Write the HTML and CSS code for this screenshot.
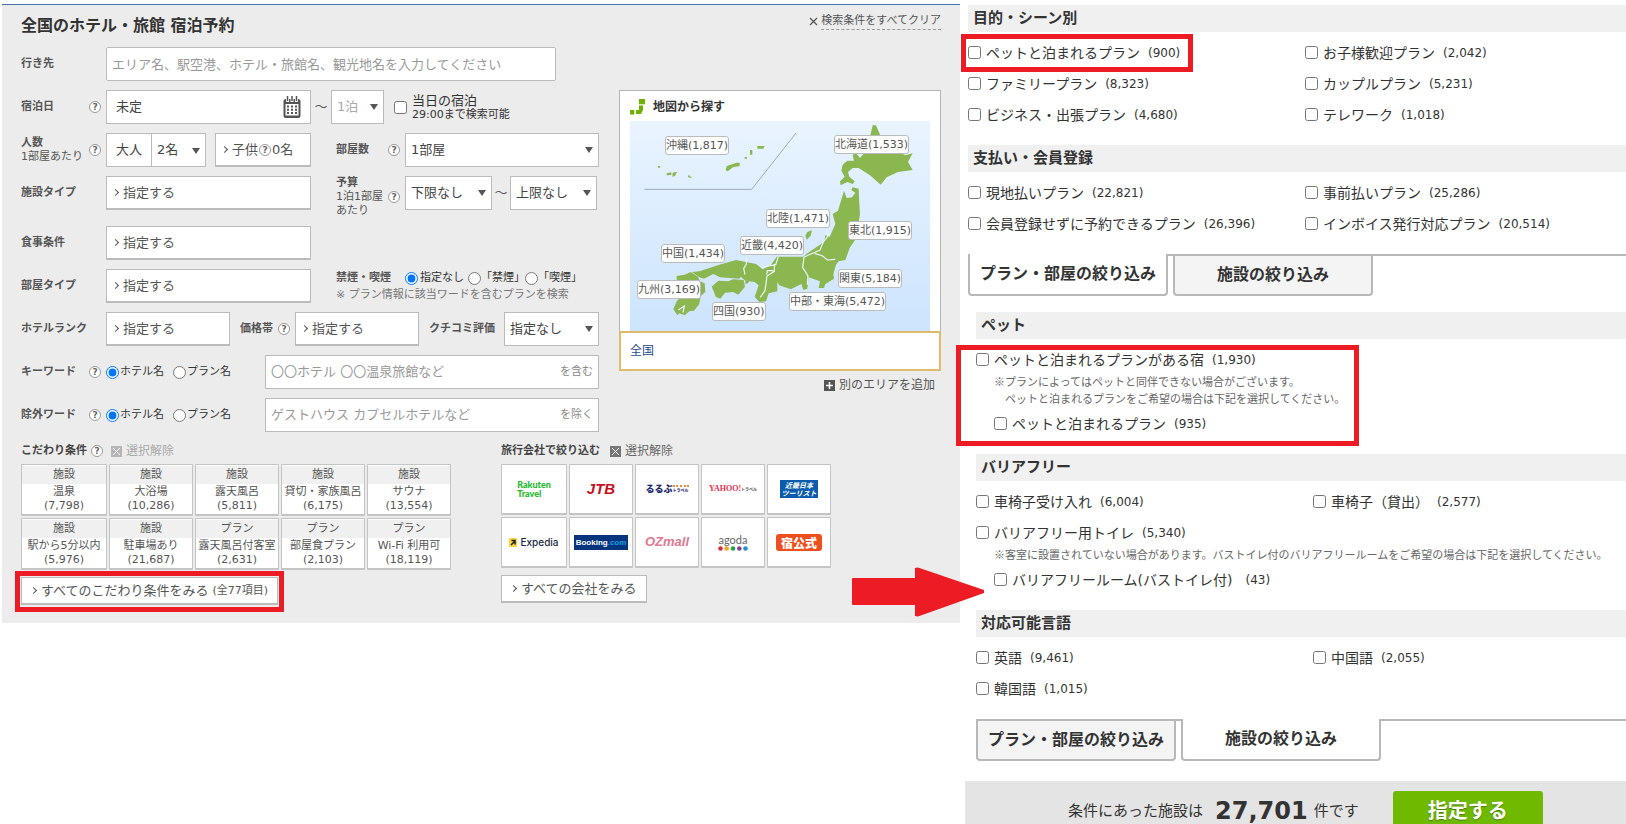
FILE: index.html
```html
<!DOCTYPE html>
<html lang="ja">
<head>
<meta charset="utf-8">
<title>全国のホテル・旅館 宿泊予約</title>
<link rel="stylesheet" href="styles.css">
</head>
<body>
<div class="page">
<main class="search">
  <header class="search-head">
    <h1>全国のホテル・旅館 宿泊予約</h1>
    <a href="#" class="clear"><svg width="9" height="9" viewBox="0 0 9 9"><path d="M1 1l7 7M8 1l-7 7" stroke="#555" stroke-width="1.3"/></svg><span>検索条件をすべてクリア</span></a>
  </header>

  <div class="row">
    <label class="lab" for="dest">行き先</label>
    <input id="dest" class="field dest" type="text" placeholder="エリア名、駅空港、ホテル・旅館名、観光地名を入力してください">
  </div>

  <div class="columns">
    <div class="fields">
      <div class="row">
        <div class="lab"><label for="date">宿泊日</label><button class="help">?</button></div>
        <div class="field date half"><input id="date" type="text" value="未定"><button class="cal" aria-label="カレンダー"><svg width="18" height="23" viewBox="0 0 18 23"><path d="M3 3h12a2.500 2.500 0 0 1 2.500 2.500v14a2.500 2.500 0 0 1-2.500 2.500H3a2.500 2.500 0 0 1-2.500-2.500v-14A2.500 2.500 0 0 1 3 3z" fill="#555"/><path d="M2.500 8h13v11.500h-13z" fill="#fff"/><path d="M4.500 0v6M9 0v6M13.500 0v6" stroke="#fff" stroke-width="3"/><path d="M4.500 0v5M9 0v5M13.500 0v5" stroke="#555" stroke-width="1.500"/><path d="M4 10.500h10M4 13.700h10M4 17h10" stroke="#555" stroke-width="2" stroke-dasharray="2 2"/></svg></button></div>
        <span class="tilde">～</span>
        <span class="select nights"><select aria-label="泊数" class="muted"><option>1泊</option></select></span>
        <label class="today"><input type="checkbox"><span>当日の宿泊<small>29:00まで検索可能</small></span></label>
      </div>
      <div class="row">
        <div class="lab"><label for="adults">人数<small>1部屋あたり</small></label><button class="help">?</button></div>
        <div class="half people">
          <div class="adults"><span>大人</span><span class="select"><select id="adults"><option>2名</option></select></span></div>
          <button class="pick child">子供<i class="help">?</i>0名</button>
        </div>
        <div class="lab lab2"><label for="rooms">部屋数</label><button class="help">?</button></div>
        <span class="select grow"><select id="rooms"><option>1部屋</option></select></span>
      </div>
      <div class="row budget">
        <div class="lab"><span>施設タイプ</span></div>
        <button class="pick half">指定する</button>
        <div class="lab lab2 three"><label for="low">予算<small>1泊1部屋<br>あたり</small></label><button class="help">?</button></div>
        <span class="select price"><select id="low"><option>下限なし</option></select></span>
        <span class="tilde near">～</span>
        <span class="select price"><select aria-label="上限"><option>上限なし</option></select></span>
      </div>
      <div class="row">
        <div class="lab"><span>食事条件</span></div>
        <button class="pick half">指定する</button>
      </div>
      <div class="row">
        <div class="lab"><span>部屋タイプ</span></div>
        <button class="pick half">指定する</button>
        <div class="smoke">
          <div class="smoke-row"><b>禁煙・喫煙</b>
            <label><input type="radio" name="smoke" checked>指定なし</label>
            <label><input type="radio" name="smoke">「禁煙」</label>
            <label><input type="radio" name="smoke">「喫煙」</label></div>
          <p>※ プラン情報に該当ワードを含むプランを検索</p>
        </div>
      </div>
      <div class="row">
        <div class="lab"><span>ホテルランク</span></div>
        <button class="pick third">指定する</button>
        <div class="lab range"><span>価格帯</span><button class="help">?</button></div>
        <button class="pick third">指定する</button>
        <label class="lab review" for="review">クチコミ評価</label>
        <span class="select grow"><select id="review"><option>指定なし</option></select></span>
      </div>
      <div class="row">
        <div class="lab"><label for="kw">キーワード</label><button class="help">?</button></div>
        <div class="radios"><label><input type="radio" name="kw" checked>ホテル名</label><label><input type="radio" name="kw">プラン名</label></div>
        <div class="field word"><input id="kw" type="text" placeholder="〇〇ホテル 〇〇温泉旅館など"><span>を含む</span></div>
      </div>
      <div class="row">
        <div class="lab"><label for="ex">除外ワード</label><button class="help">?</button></div>
        <div class="radios"><label><input type="radio" name="ex" checked>ホテル名</label><label><input type="radio" name="ex">プラン名</label></div>
        <div class="field word"><input id="ex" type="text" placeholder="ゲストハウス カプセルホテルなど"><span>を除く</span></div>
      </div>
    </div>

    <aside class="area">
      <div class="map-card">
        <h2><svg width="16" height="16" viewBox="0 0 16 16" fill="#6fb000"><path d="M9 0h6v5.300H9zM9 6.500h4v4.500l-2 4H6v-4h3zM0 11h4.300v4.500H0z"/></svg>地図から探す</h2>
        <div class="map">
          <svg viewBox="60 123 900 630" width="300" height="210">
            <path d="M103 328H425L558 159" fill="none" stroke="#a3aab4" stroke-width="3"/>
            <g fill="#8ab750">
              <path d="M788 136h10l12 28 40 46 36 16 22-6-14 26 14 24-44 6-34 16-18 22-32-28-34-22-18 0-14 12 4 14 16 14-6 8-16-6-20 10-2-12 14-14-10-18 4-18 14-12 20 0-4-18 10-4 12 14 14-16 24-8-8-40z"/>
              <path d="M702 332l8 22 16-2 10-14-12-8 4-8 18 4 2 46 2 30-12 74-18 26-14 38-20 4-46 4-28 10-30-14 50-30 22-32 22-50-8-30 16-10z"/>
              <path d="M592 456l14-5-4 16-12 12-4-12z"/>
              <path d="M500 530h80l12-10 50-34 4-20 60 20-16 52-12 16-8 28 2 14-26 16-4 12-16 0 4-20-34-12-4 34-12 4-6-18-32 16-34-12-6-10 0 28-26 6-8 24-20 2-14-16 12-34-12-10-28-4-14-12-4 6-58-4-20-10-28 14-14-4-22-16 22-2 60-20 50-14 60 12 20 16 24-12z"/>
              <path d="M305 620l20-18 30 2 14-6 32 2 4 20-20 24-16-8-24 2-14 18-14-6-6-16z"/>
              <path d="M406 604l14-8-6 14-8 2z"/>
              <path d="M200 588l24-4 18-8 22 14 6 14 14 6 2 26-14 12-4 24-16 20-14 2-14 12-16-6-6 6-12-18 10-24 14-14-12-6-12-26 10-12z"/>
              <path d="M442 198h22l-4 8h-18zM420 210h7v14h-7zM404 231h7v5h-7zM144 258h6v5h-6zM170 280l14-3v8l-14 1zM188 278l13-3-6 13-8 2zM236 284l10 10-12-2zM350 258l30-10h9v10l-20 4-16 12-6-3z"/>
            </g>
            <g fill="none" stroke="#eef6ff" stroke-width="3.500">
              <path d="M650 452l4 16-14 18-10 24-36 16-12 6-4 30 16 26-2 26"/>
              <path d="M614 520l24 8 14 12 24-2"/><path d="M409 532v20l-8 14 4 18"/>
              <path d="M505 530l-8 24-42 8M493 552v22l-22 14-6 44-14 20M470 584l2-12 18 0"/>
              <path d="M205 690l18-12-4 20"/>
            </g>
          </svg>
          <a href="#" class="pin okinawa">沖縄(1,817)</a>
          <a href="#" class="pin hokkaido">北海道(1,533)</a>
          <a href="#" class="pin hokuriku">北陸(1,471)</a>
          <a href="#" class="pin tohoku">東北(1,915)</a>
          <a href="#" class="pin kinki">近畿(4,420)</a>
          <a href="#" class="pin chugoku">中国(1,434)</a>
          <a href="#" class="pin kanto">関東(5,184)</a>
          <a href="#" class="pin kyushu">九州(3,169)</a>
          <a href="#" class="pin chubu">中部・東海(5,472)</a>
          <a href="#" class="pin shikoku">四国(930)</a>
        </div>
      </div>
      <div class="nation"><a href="#">全国</a></div>
      <a href="#" class="add"><svg width="11" height="11" viewBox="0 0 11 11"><path d="M0 0h11v11H0z" fill="#555"/><path d="M2 5.500h7M5.500 2v7" stroke="#fff" stroke-width="1.500"/></svg>別のエリアを追加</a>
    </aside>
  </div>

  <div class="filters">
    <section class="features">
      <div class="sub"><h2>こだわり条件</h2><button class="help">?</button><button class="reset off"><svg width="11" height="11" viewBox="0 0 11 11"><path d="M0 0h11v11H0z" fill="#b5b5b5"/><path d="M2 2l7 7M9 2l-7 7" stroke="#fff"/></svg>選択解除</button></div>
      <div class="cells">
        <button><em>施設</em>温泉<br>(7,798)</button>
        <button><em>施設</em>大浴場<br>(10,286)</button>
        <button><em>施設</em>露天風呂<br>(5,811)</button>
        <button><em>施設</em>貸切・家族風呂<br>(6,175)</button>
        <button><em>施設</em>サウナ<br>(13,554)</button>
        <button><em>施設</em>駅から5分以内<br>(5,976)</button>
        <button><em>施設</em>駐車場あり<br>(21,687)</button>
        <button><em>プラン</em>露天風呂付客室<br>(2,631)</button>
        <button><em>プラン</em>部屋食プラン<br>(2,103)</button>
        <button><em>プラン</em>Wi-Fi 利用可<br>(18,119)</button>
      </div>
      <div class="all marked"><button class="pick more">すべてのこだわり条件をみる<small>(全77項目)</small></button></div>
    </section>
    <section class="companies">
      <div class="sub"><h2>旅行会社で絞り込む</h2><button class="reset"><svg width="11" height="11" viewBox="0 0 11 11"><path d="M0 0h11v11H0z" fill="#777"/><path d="M2 2l7 7M9 2l-7 7" stroke="#fff"/></svg>選択解除</button></div>
      <div class="cells logos">
        <button><span class="rakuten">Rakuten<br>Travel</span></button>
        <button><span class="jtb">JTB</span></button>
        <button><span class="rurubu">るるぶ<small>トラベル</small></span></button>
        <button><span class="yahoo">YAHOO!<small>トラベル</small></span></button>
        <button><span class="knt">近畿日本<br>ツーリスト</span></button>
        <button><span class="expedia"><svg width="8" height="9" viewBox="0 0 8 9"><rect width="8" height="9" rx="1" fill="#f8d436"/><path d="M2 7l4-4M2.500 2.500H6v4" stroke="#222" stroke-width="1.500" fill="none"/></svg>Expedia</span></button>
        <button><span class="booking">Booking<i>.com</i></span></button>
        <button><span class="oz">OZmall</span></button>
        <button><span class="agoda">agoda<svg width="30" height="5" viewBox="0 0 30 5"><circle cx="2.500" cy="2.500" r="2.300" fill="#e12a3c"/><circle cx="8.700" cy="2.500" r="2.300" fill="#f4a81d"/><circle cx="15" cy="2.500" r="2.300" fill="#22a34a"/><circle cx="21.300" cy="2.500" r="2.300" fill="#893b94"/><circle cx="27.500" cy="2.500" r="2.300" fill="#2490cf"/></svg></span></button>
        <button><span class="yado">宿公式</span></button>
      </div>
      <div class="all"><button class="pick more">すべての会社をみる</button></div>
    </section>
  </div>
  <svg class="arrow" width="133" height="50" viewBox="0 0 133 50"><path d="M1 11h62V1l3-.5L132 23v3L66 49.500l-3-.5V38H1q-1 0-1-1V12q0-1 1-1z" fill="#ed1c24"/></svg>
</main>

<section class="detail">
  <div class="plans">
    <h3>目的・シーン別</h3>
    <div class="opts">
      <label class="marked"><input type="checkbox">ペットと泊まれるプラン<b>(900)</b></label>
      <label><input type="checkbox">お子様歓迎プラン<b>(2,042)</b></label>
      <label><input type="checkbox">ファミリープラン<b>(8,323)</b></label>
      <label><input type="checkbox">カップルプラン<b>(5,231)</b></label>
      <label><input type="checkbox">ビジネス・出張プラン<b>(4,680)</b></label>
      <label><input type="checkbox">テレワーク<b>(1,018)</b></label>
    </div>
    <h3>支払い・会員登録</h3>
    <div class="opts">
      <label><input type="checkbox">現地払いプラン<b>(22,821)</b></label>
      <label><input type="checkbox">事前払いプラン<b>(25,286)</b></label>
      <label><input type="checkbox">会員登録せずに予約できるプラン<b>(26,396)</b></label>
      <label><input type="checkbox">インボイス発行対応プラン<b>(20,514)</b></label>
    </div>
    <div class="tabs"><button class="on">プラン・部屋の絞り込み</button><span></span><button>施設の絞り込み</button></div>
  </div>

  <div class="places">
    <h3>ペット</h3>
    <div class="pet marked">
      <div class="opts"><label><input type="checkbox">ペットと泊まれるプランがある宿<b>(1,930)</b></label></div>
      <p class="note">※プランによってはペットと同伴できない場合がございます。<br>　ペットと泊まれるプランをご希望の場合は下記を選択してください。</p>
      <div class="opts nested"><label><input type="checkbox">ペットと泊まれるプラン<b>(935)</b></label></div>
    </div>
    <h3>バリアフリー</h3>
    <div class="opts">
      <label><input type="checkbox">車椅子受け入れ<b>(6,004)</b></label>
      <label><input type="checkbox">車椅子（貸出）<b>(2,577)</b></label>
      <label><input type="checkbox">バリアフリー用トイレ<b>(5,340)</b></label>
    </div>
    <p class="note">※客室に設置されていない場合があります。バストイレ付のバリアフリールームをご希望の場合は下記を選択してください。</p>
    <div class="opts nested"><label><input type="checkbox">バリアフリールーム(バストイレ付)<b class="apart">(43)</b></label></div>
    <h3>対応可能言語</h3>
    <div class="opts">
      <label><input type="checkbox">英語<b>(9,461)</b></label>
      <label><input type="checkbox">中国語<b>(2,055)</b></label>
      <label><input type="checkbox">韓国語<b>(1,015)</b></label>
    </div>
    <div class="tabs"><button>プラン・部屋の絞り込み</button><span></span><button class="on">施設の絞り込み</button></div>
  </div>

  <footer class="result">
    <p>条件にあった施設は <strong>27,701</strong> 件です</p>
    <button>指定する</button>
  </footer>
</section>
</div>
</body>
</html>
```
FILE: styles.css
```css
*, *::before, *::after { box-sizing: border-box; }
body {
  margin: 0;
  height: 100vh;
  overflow: hidden;
  background: #fff;
  color: #555;
  font: 13px/16px "DejaVu Sans", "Noto Sans CJK JP", sans-serif;
}
button, input, select { font: inherit; color: inherit; margin: 0; padding: 0; }
button { cursor: pointer; border: 0; background: none; }
h1, h2, h3, p { margin: 0; }
svg { display: block; flex: none; }
a { text-decoration: none; }
label, button, .lab, .select { white-space: nowrap; }
input[type="checkbox"], input[type="radio"] { width: 13px; height: 13px; flex: none; }

.page { display: grid; grid-template-columns: minmax(0, 960fr) minmax(0, 666fr); align-items: start; }

/* Search panel */
.search {
  position: relative;
  margin: 4px 0 0 2px;
  padding: 0 19px 18px;
  background: #ececec;
  border-top: 1px solid #4472a8;
}
.search-head { display: flex; justify-content: space-between; height: 42px; }
h1 { font-size: 16px; line-height: 42px; color: #333; }
.clear { display: flex; align-items: center; gap: 3px; height: 18px; margin-top: 7px; font-size: 11px; color: #555; }
.clear span { border-bottom: 1px dashed #999; line-height: 17px; }

.row { display: flex; height: 34px; }
.budget { height: 41px; align-items: flex-start; }
.columns { display: flex; gap: 20px; margin-top: 9px; }
.fields { flex: 1; min-width: 0; display: flex; flex-direction: column; gap: 9px; }

.lab {
  flex: none;
  display: flex;
  align-items: center;
  justify-content: space-between;
  width: 85px;
  height: 34px;
  padding-right: 5px;
  font-size: 11px;
  line-height: 14px;
  font-weight: bold;
}
.lab small { display: block; font-size: 11px; font-weight: normal; }
.lab2 { width: 94px; padding-left: 25px; }
.three { height: 41px; }
.range { width: 65px; padding-left: 10px; }
.review { width: 85px; padding-left: 10px; }
.help {
  flex: none;
  display: inline-flex;
  align-items: center;
  justify-content: center;
  width: 12px;
  height: 12px;
  border: 1px solid #999;
  border-radius: 50%;
  background: #fff;
  color: #666;
  font-size: 9px;
  line-height: 10px;
  font-style: normal;
  font-weight: bold;
}

.field { background: #fff; border: 1px solid #bbb; height: 34px; }
.dest { width: 450px; padding: 0 5px; border-radius: 2px; }
input::placeholder { color: #999; }
.half { flex: none; width: 205px; }
.third { flex: none; width: 124px; }
.grow { flex: 1; }
.date { display: flex; align-items: center; padding: 0 9px; color: #444; }
.date input, .word input { flex: 1; min-width: 0; border: 0; background: none; }
.tilde { flex: none; width: 20px; line-height: 34px; text-align: center; }
.near { width: 18px; }

.select { position: relative; display: flex; height: 34px; }
.select select { width: 100%; appearance: none; background: #fff; border: 1px solid #bbb; border-radius: 0; padding: 0 5px; color: #444; }
.select select.muted { color: #aaa; }
.select::after {
  content: "";
  position: absolute;
  right: 6px;
  top: 14px;
  border: 4px solid transparent;
  border-top: 6px solid #555;
  border-bottom: 0;
  pointer-events: none;
}
.nights { width: 53px; }
.price { width: 87px; }
.today { display: flex; align-items: center; gap: 5px; margin-left: 10px; line-height: 15px; color: #333; }
.today small { display: block; font-size: 11px; line-height: 13px; }

.people { display: flex; justify-content: space-between; }
.adults { display: flex; width: 100px; background: #fff; border: 1px solid #bbb; line-height: 32px; color: #444; }
.adults > span:first-child { width: 45px; text-align: center; border-right: 1px solid #bbb; }
.adults .select { flex: 1; height: 32px; }
.adults .select select { border: 0; }
.adults .select::after { right: 5px; }

.pick {
  display: flex;
  align-items: center;
  gap: 4px;
  height: 34px;
  padding: 0 6px;
  background: #fff;
  border: 1px solid #bbb;
  border-bottom-width: 2px;
  color: #555;
}
.pick::before {
  content: "";
  width: 5px;
  height: 5px;
  margin-right: 1px;
  border: solid #555;
  border-width: 1px 1px 0 0;
  transform: rotate(45deg);
}
.child { width: 96px; gap: 1px; }
.child::before { margin-right: 4px; }

.smoke { padding: 0 0 0 25px; font-size: 11px; }
.smoke-row { display: flex; align-items: center; height: 18px; }
.smoke-row b { width: 69px; }
.smoke-row label { display: flex; align-items: center; color: #333; }
.smoke-row label:first-of-type { gap: 2px; margin-right: 4px; }
.smoke p { color: #777; white-space: nowrap; }

.radios { display: flex; width: 159px; gap: 9px; font-size: 11px; color: #333; }
.radios label { display: flex; align-items: center; gap: 1px; }
.word { flex: 1; display: flex; align-items: center; padding: 0 5px; }
.word span { font-size: 11px; color: #888; }

/* Area map */
.area { flex: none; width: 322px; }
.map-card { background: #fff; border: 1px solid #b5b5b5; border-bottom: 0; padding: 0 10px; }
.map-card h2 { display: flex; align-items: center; gap: 7px; height: 30px; padding-top: 2px; font-size: 12px; color: #333; }
.map { position: relative; height: 210px; background: linear-gradient(#e9f4ff, #cce4fd); }
.pin {
  position: absolute;
  background: #fff;
  border: 1px solid #bbb;
  border-radius: 3px;
  color: #555;
  font-size: 11px;
  line-height: 17px;
  white-space: nowrap;
}
.okinawa { left: 35px; top: 15px; }
.hokkaido { left: 204px; top: 14px; }
.hokuriku { left: 136px; top: 88px; }
.tohoku { left: 218px; top: 100px; }
.kinki { left: 110px; top: 115px; }
.chugoku { left: 31px; top: 123px; }
.kanto { left: 208px; top: 148px; }
.kyushu { left: 7px; top: 159px; }
.chubu { left: 159px; top: 171px; }
.shikoku { left: 82px; top: 181px; }
.nation { height: 40px; padding: 0 9px; background: #fff; border: 2px solid #dfbc6c; font-size: 12px; line-height: 36px; }
.nation a { color: #1f4b8a; }
.add { display: flex; justify-content: flex-end; align-items: center; gap: 4px; margin: 6px 6px 0 0; font-size: 12px; color: #555; }

/* Filters under the form */
.filters { display: flex; gap: 50px; padding-top: 12px; }
.features { width: 430px; }
.companies { width: 330px; }
.sub { display: flex; align-items: center; height: 14px; margin-bottom: 6px; }
.sub h2 { font-size: 11px; line-height: 14px; color: #444; margin-right: 4px; }
.reset { display: flex; align-items: center; gap: 4px; margin-left: 6px; font-size: 12px; line-height: 14px; color: #666; }
.off { color: #aaa; margin-left: 8px; }
.cells { display: grid; grid-template-columns: 86fr repeat(4, minmax(0, 84fr)); gap: 2px; }
.cells button {
  display: block;
  height: 52px;
  background: #fff;
  border: 1px solid #c4c4c4;
  border-bottom-width: 2px;
  border-radius: 1px;
  font-size: 11px;
  line-height: 14px;
  color: #555;
}
.cells em { display: block; height: 18px; margin-bottom: 1px; background: #f0f0f0; font-style: normal; line-height: 18px; }
.logos { grid-template-columns: 66fr repeat(4, minmax(0, 64fr)); }
.logos button { display: flex; align-items: center; justify-content: center; height: 51px; }
.all { width: max-content; margin-top: 7px; }
.more { height: 28px; padding: 0 9px; }
.more small { font-size: 11px; }

.rakuten { font: 900 9px/9px Lato, sans-serif; color: #1db82c; text-align: left; }
.jtb { font: italic bold 15px/18px "Liberation Sans", sans-serif; color: #c8101c; }
.rurubu { font: 900 9px/10px "Noto Sans CJK JP", sans-serif; color: #24246e; }
.rurubu small { font-size: 4px; border-top: 2px dotted #e98b3a; }
.yahoo { font: bold 8px/10px "Liberation Serif", serif; color: #e5304e; }
.yahoo small { font: bold 4px/10px "Noto Sans CJK JP", sans-serif; color: #444; }
.knt { width: 38px; padding: 1px 0; background: #0a5cad; color: #fff; font: italic bold 7px/8px "Noto Sans CJK JP", sans-serif; }
.expedia { display: flex; align-items: center; gap: 3px; font: 500 10px/12px Inter, sans-serif; color: #222a44; }
.booking { padding: 0 2px; background: #07357d; color: #fff; font: bold 8px/15px "Liberation Sans", sans-serif; }
.booking i { font-style: normal; color: #159de0; }
.oz { font: italic bold 13px/16px "Liberation Sans", sans-serif; color: #e0778f; }
.agoda { font: 11px/11px Lato, sans-serif; color: #666; }
.agoda svg { margin-top: 1px; }
.yado { padding: 0 5px; background: #ee4f1e; color: #fff; border-radius: 3px; font: 900 12px/17px "Noto Sans CJK JP", sans-serif; }

/* Red emphasis frames and arrow */
.marked { position: relative; }
.marked::after { content: ""; position: absolute; border: 5px solid #ed1c24; pointer-events: none; }
.all.marked::after { inset: -6px -6px -7px; }
.opts .marked::after { left: -7px; width: 232px; top: -3px; height: 38px; }
.pet.marked::after { left: -20px; top: 1px; bottom: -7px; width: 403px; }
.arrow { position: absolute; left: 850px; top: 562px; z-index: 1; }

/* Detailed conditions */
.detail { color: #333; padding-top: 5px; }
.plans { padding-left: 8px; }
.places { padding-left: 16px; }
h3 { height: 27px; padding-left: 5px; background: #f0f0f0; font-size: 15px; line-height: 27px; margin: 15px 0 5px; }
.plans h3:first-child { margin-top: 0; }
.places h3:first-child { margin-top: 16px; }
.opts { display: grid; grid-template-columns: 337px 1fr; font-size: 14px; }
.opts label { display: flex; align-items: center; gap: 5px; height: 31px; }
.opts b { font-weight: normal; font-size: 12px; margin-left: 3px; }
.opts .apart { margin-left: 8px; }
.nested { display: block; padding-left: 18px; }
.note { margin: -2px 0 1px; padding-left: 18px; font: 11px/17px "Noto Sans CJK JP", sans-serif; color: #666; white-space: nowrap; }

.tabs { display: flex; height: 42px; margin-top: 15px; }
.tabs button {
  width: 200px;
  background: #f4f4f4;
  border: 2px solid #b8b8b8;
  border-radius: 0 0 4px 4px;
  font-size: 16px;
  font-weight: bold;
  color: #333;
}
.tabs .on { background: #fff; border-top-width: 0; }
.tabs span { width: 5px; border-top: 2px solid #b8b8b8; }
.tabs::after { content: ""; flex: 1; border-top: 2px solid #b8b8b8; }

.result { display: flex; align-items: center; gap: 34px; margin: 20px 0 0 5px; padding: 10px 0 10px 103px; background: #e4e4e4; }
.result p { display: flex; align-items: center; gap: 6px; font-size: 15px; line-height: 40px; white-space: nowrap; }
.result strong { font-size: 24px; margin-left: 6px; }
.result button { width: 150px; height: 40px; border-radius: 3px; background: #6fb900; color: #fff; font-size: 20px; font-weight: bold; text-shadow: 0 1px 1px #4a7d00; }
```
